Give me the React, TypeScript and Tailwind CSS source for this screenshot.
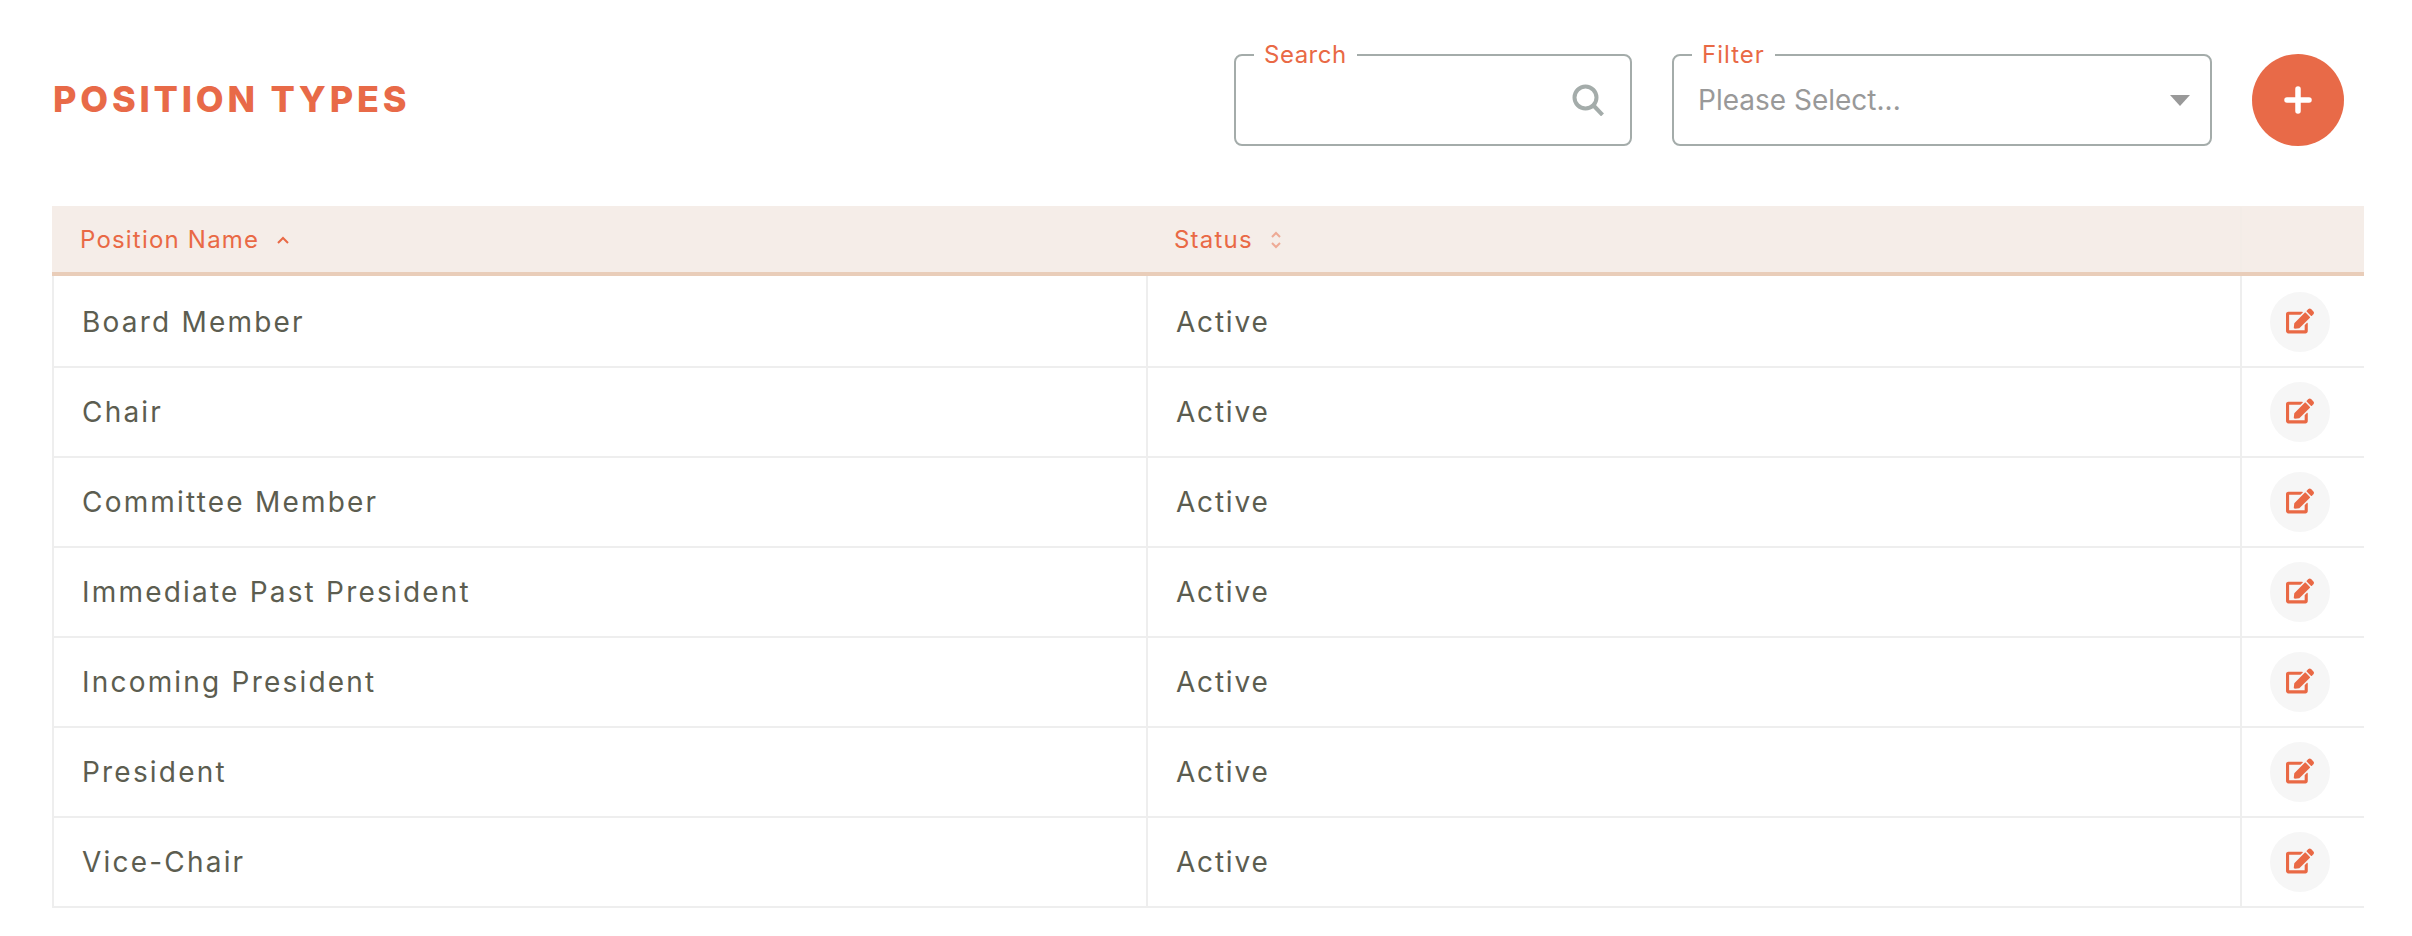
import { FaEdit } from 'react-icons/fa'

const positions = [
  'Board Member',
  'Chair',
  'Committee Member',
  'Immediate Past President',
  'Incoming President',
  'President',
  'Vice-Chair',
]

function Field({ label, width, tracking, children }: { label: string; width: string; tracking: string; children: React.ReactNode }) {
  return (
    <fieldset className={`${width} h-[92px] rounded-[8px] border-2 border-[#a4acaa] flex items-center`}>
      <legend className={`ml-[18px] px-[10px] text-[24px] leading-[2px] text-[#e96945] ${tracking}`}>{label}</legend>
      {children}
    </fieldset>
  )
}

export default function App() {
  return (
    <div className="min-h-[936px] bg-white pl-[52px] pr-[48px] pt-[54px] font-['Inter',sans-serif]">
      {/* Top bar */}
      <div className="flex items-center justify-between pr-[20px]">
        <h1 className="pl-[1px] pb-[2px] text-[36px] font-extrabold tracking-[3.8px] text-[#e86a48]">POSITION TYPES</h1>
        <div className="flex items-center gap-[40px]">
          <Field label="Search" width="w-[398px]" tracking="tracking-[0.5px]">
            <div className="ml-auto mr-[26px]">
              <svg className="w-[32px] h-[32px] text-[#a4acaa]" viewBox="0 0 32 32" fill="none" stroke="currentColor" strokeWidth="4">
                <circle cx="13.5" cy="13.5" r="11" />
                <path d="M21.5 21.5l9 9.5" />
              </svg>
            </div>
          </Field>
          <Field label="Filter" width="w-[540px]" tracking="tracking-[1px]">
            <span className="pl-[24px] text-[28px] text-[#999999]">Please Select...</span>
            <div className="ml-auto mr-[20px] w-0 h-0 border-x-[10px] border-x-transparent border-t-[11px] border-t-[#999999]"></div>
          </Field>
          <button className="w-[92px] h-[92px] rounded-full bg-[#e86a48] flex items-center justify-center">
            <svg className="w-[28px] h-[28px] text-white" viewBox="0 0 28 28" fill="none" stroke="currentColor" strokeWidth="5.5" strokeLinecap="round">
              <path d="M14 3v22M3 14h22" />
            </svg>
          </button>
        </div>
      </div>

      {/* Table */}
      <div className="mt-[60px]">
        <div className="grid grid-cols-[1094px_1094px_124px] h-[70px] pt-[1px] bg-[#f5ede8] border-b-4 border-[#e9cdb9] text-[24px] tracking-[1.2px] text-[#e96945]">
          <div className="flex items-center gap-[18px] pl-[28px]">
            Position Name
            <svg className="w-[12px] h-[8px]" viewBox="0 0 12 8" fill="none" stroke="currentColor" strokeWidth="2">
              <path d="M1 7l5-5 5 5" />
            </svg>
          </div>
          <div className="flex items-center gap-[18px] pl-[28px]">
            Status
            <svg className="w-[10px] h-[18px] opacity-50" viewBox="0 0 10 18" fill="none" stroke="currentColor" strokeWidth="2">
              <path d="M1 6l4-4 4 4M1 12l4 4 4-4" />
            </svg>
          </div>
          <div className="border-l-2 border-[#f3ece7]"></div>
        </div>
        {positions.map((name, i) => {
          const first = i === 0 ? 'pt-[2px]' : ''
          return (
            <div key={name} className={`grid grid-cols-[1094px_1094px_124px] ${i === 0 ? 'h-[92px]' : 'h-[90px]'} border-b-2 border-[#eeeeee] text-[28px] text-[#5c5d50]`}>
              <div className={`flex items-center border-l-2 border-[#eeeeee] pl-[28px] tracking-[2.2px] ${first}`}>{name}</div>
              <div className={`flex items-center border-l-2 border-[#eeeeee] pl-[28px] tracking-[1.8px] ${first}`}>Active</div>
              <div className={`flex items-center border-l-2 border-[#eeeeee] pl-[28px] ${first}`}>
                <button className="w-[60px] h-[60px] rounded-full bg-[#f6f6f6] flex items-center justify-center text-[28px] text-[#e96945]">
                  <FaEdit className="mb-[2px]" />
                </button>
              </div>
            </div>
          )
        })}
      </div>
    </div>
  )
}
